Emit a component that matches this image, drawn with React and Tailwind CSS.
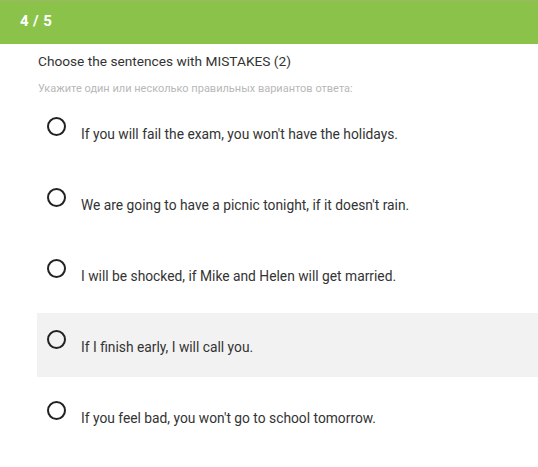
import React from 'react';

const options = [
    "If you will fail the exam, you won't have the holidays.",
    "We are going to have a picnic tonight, if it doesn't rain.",
    'I will be shocked, if Mike and Helen will get married.',
    'If I finish early, I will call you.',
    "If you feel bad, you won't go to school tomorrow.",
];

export default function App() {
    return (
        <div className="w-[538px] h-[467px] bg-white overflow-hidden font-['Roboto',sans-serif]">
            {/* Header */}
            <div className="h-[44px] bg-[#8bc34a] border-t border-[#9cb76a] flex items-center px-[20px] pb-[2px]">
                <span className="text-white font-bold text-[15px] tracking-wide">4 / 5</span>
            </div>

            <div className="pl-[37px]">
                <div className="pt-[8px] pl-[1px] text-[13.7px] leading-[18px] text-[#333]">
                    Choose the sentences with MISTAKES (2)
                </div>
                <div className="mt-[12px] pl-[1px] text-[11px] leading-[14px] text-[#b8b8b8]">
                    Укажите один или несколько правильных вариантов ответа:
                </div>

                <div className="mt-[4px] flex flex-col gap-[7px]">
                    {options.map((text, i) => (
                        <div
                            key={i}
                            className={`h-[64px] flex items-start pl-[10px] pt-[17px] ${i === 3 ? 'bg-[#f2f2f2]' : ''}`}
                        >
                            <div className="w-[19px] h-[19px] rounded-full border-2 border-[#222] shrink-0" />
                            <span className="ml-[15px] mt-[8px] text-[13.8px] leading-[18px] text-[#333]">
                                {text}
                            </span>
                        </div>
                    ))}
                </div>
            </div>
        </div>
    );
}
